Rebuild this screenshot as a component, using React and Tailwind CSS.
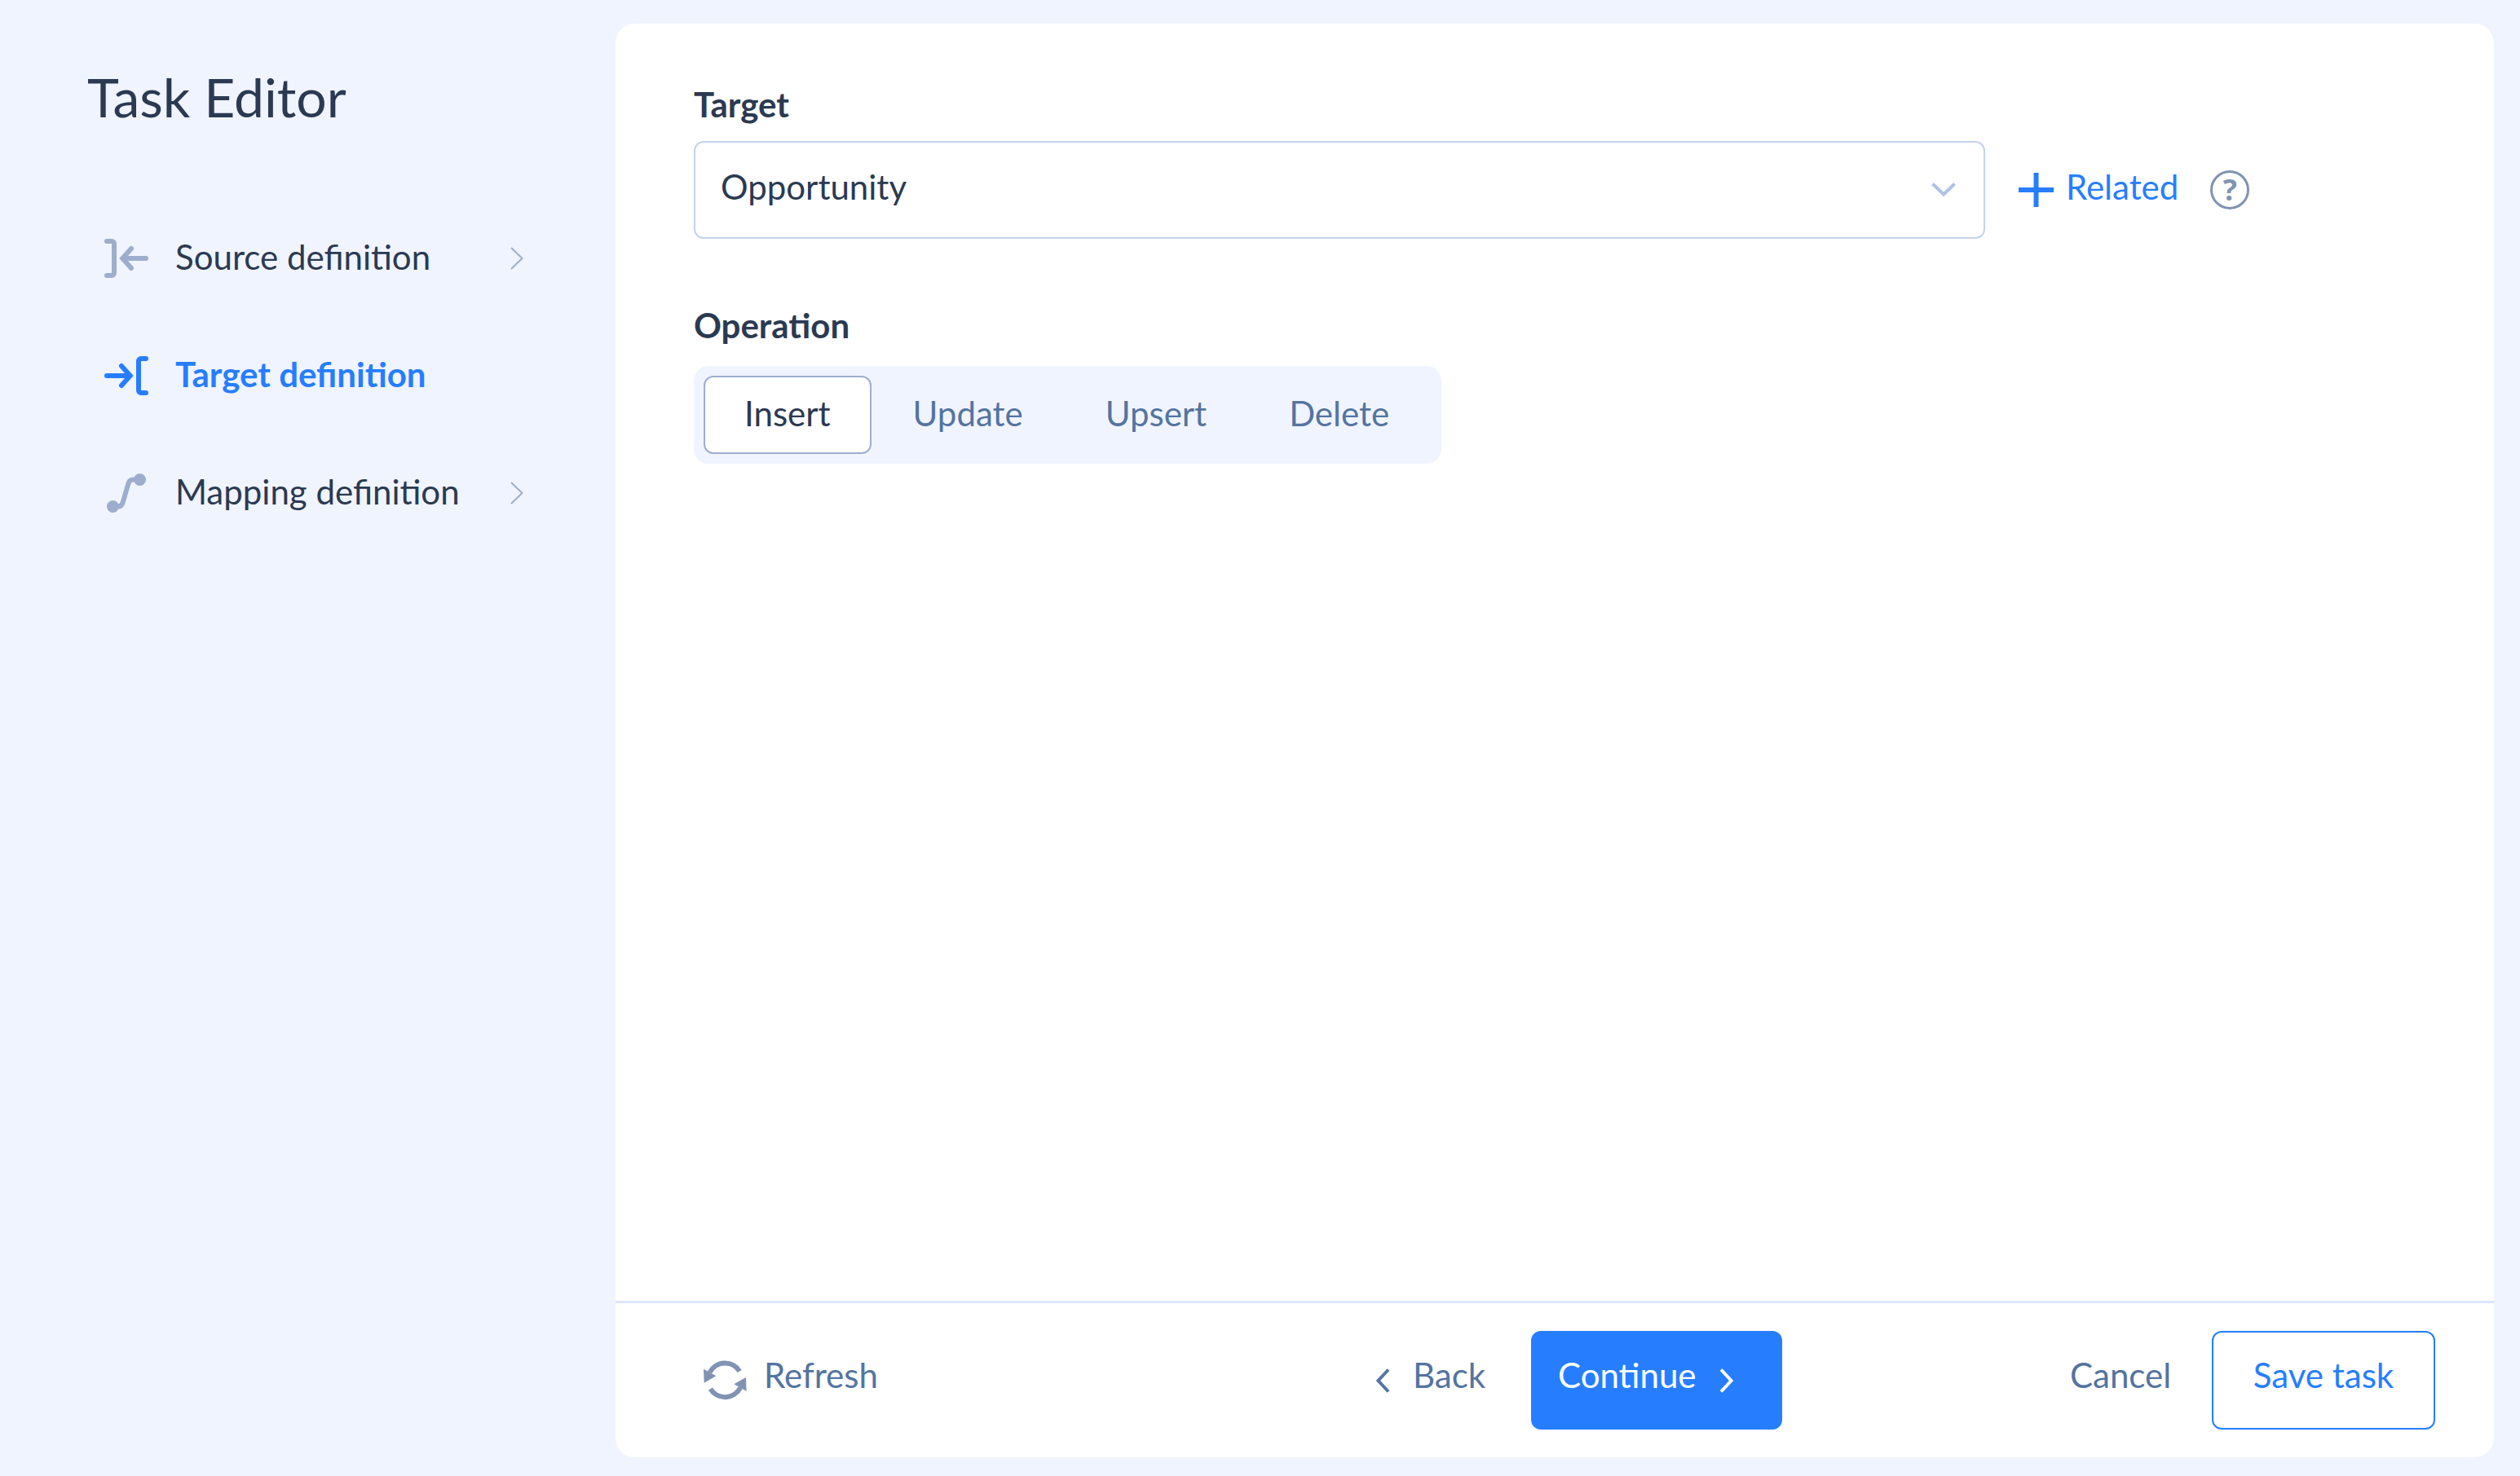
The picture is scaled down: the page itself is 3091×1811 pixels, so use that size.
import React from 'react'

function SourceIcon() {
  return (
    <svg className="w-[54px] h-12" viewBox="0 0 54 48" fill="none" stroke="currentColor" strokeWidth="6" strokeLinecap="round">
      <path d="M3 3H9a3 3 0 0 1 3 3V42a3 3 0 0 1-3 3H3" />
      <path d="M51 24H24M33 12L22.3 24L33 36" />
    </svg>
  )
}

function TargetIcon() {
  return (
    <svg className="w-[54px] h-12" viewBox="0 0 54 48" fill="none" stroke="currentColor" strokeWidth="6" strokeLinecap="round">
      <path d="M51 3H45a3 3 0 0 0-3 3V42a3 3 0 0 0 3 3H51" />
      <path d="M3 24H30M21 12L31.7 24L21 36" />
    </svg>
  )
}

function MappingIcon() {
  return (
    <svg className="w-[54px] h-12" viewBox="0 0 54 48" fill="none" stroke="currentColor" strokeWidth="6">
      <circle cx="10.5" cy="40.5" r="7.5" fill="currentColor" stroke="none" />
      <circle cx="43.5" cy="7.5" r="7.5" fill="currentColor" stroke="none" />
      <path d="M10.5 40.5H17C20 40.5 21.5 39 22.5 36L29.5 12C30.5 9 32 7.5 35 7.5H43.5" />
    </svg>
  )
}

function RefreshIcon() {
  return (
    <svg className="w-[53px] h-[49px]" viewBox="0 0 53 49" fill="none">
      <path d="M7.5 15A21 21 0 0 1 44.2 13.5" stroke="currentColor" strokeWidth="6" />
      <path d="M45.1 33.6A21 21 0 0 1 8.4 35.1" stroke="currentColor" strokeWidth="6" />
      <path d="M0 10.7L15.3 19.3L0.7 27.7Z" fill="currentColor" />
      <path d="M52.6 37.9L37.3 29.3L51.9 20.9Z" fill="currentColor" />
    </svg>
  )
}

function NavItem(props) {
  return (
    <li className="flex items-center h-36 pl-32 pr-[112px]">
      <span className={props.active ? 'text-[#267eff]' : 'text-[#9dadcd]'}>{props.icon}</span>
      <span className={props.active ? 'ml-[33px] pb-1 font-bold text-[#267eff]' : 'ml-[33px] pb-1'}>{props.name}</span>
      {!props.active && (
        <svg className="ml-auto w-[17px] h-[28px] text-[#9dadcd]" viewBox="0 0 17 28" fill="none" stroke="currentColor" strokeWidth="2">
          <path d="M1 1L14.5 14L1 27" />
        </svg>
      )}
    </li>
  )
}

function Operation(props) {
  return (
    <button
      className={
        props.selected
          ? 'h-24 px-12 pb-1 border-2 border-[#9dafd0] rounded-xl bg-white'
          : 'h-24 px-12 pb-1 border-2 border-transparent text-[#5474a1]'
      }>
      {props.name}
    </button>
  )
}

function App() {
  const operations = ['Insert', 'Update', 'Upsert', 'Delete']

  return (
    <div className="flex w-[3091px] h-[1811px] bg-[#f0f4ff] font-['Lato',sans-serif] text-[42px] leading-none text-[#2b3a52] overflow-hidden">
      <aside className="w-[755px]">
        <h1 className="pt-[86px] pl-[107px] text-[66px] leading-[66px]">Task Editor</h1>
        <ul className="mt-[93px]">
          <NavItem name="Source definition" icon={<SourceIcon />} />
          <NavItem name="Target definition" icon={<TargetIcon />} active />
          <NavItem name="Mapping definition" icon={<MappingIcon />} />
        </ul>
      </aside>
      <main className="flex flex-col mt-[29px] w-[2304px] h-[1759px] rounded-3xl bg-white">
        <section className="flex-1 px-24 pt-[78px]">
          <label className="block font-bold">Target</label>
          <div className="flex items-center mt-6 h-[120px]">
            <div className="flex items-center justify-between w-[1584px] h-[120px] pl-[31px] pr-[34px] border-2 border-[#c4d3ec] rounded-xl">
              <span className="pb-2">Opportunity</span>
              <svg className="w-[30px] h-[18px]" viewBox="0 0 30 18" fill="none" stroke="#aec3e4" strokeWidth="4">
                <path d="M1.5 1.5L15 14.5L28.5 1.5" />
              </svg>
            </div>
            <button className="flex items-center ml-[41px] text-[#267eff]">
              <svg className="w-[43px] h-[42px]" viewBox="0 0 43 42" fill="none" stroke="currentColor" strokeWidth="6">
                <path d="M0 21H43M21.5 0V42" />
              </svg>
              <span className="ml-[15px] pb-2">Related</span>
            </button>
            <span className="flex items-center justify-center ml-[39px] size-12 border-[3px] border-[#8193b3] rounded-full font-['Open_Sans',sans-serif] text-[36px] font-bold text-[#8193b3]">
              ?
            </span>
          </div>
          <label className="block mt-[85px] font-bold">Operation</label>
          <div className="flex items-center gap-px mt-[29px] w-[917px] h-[120px] pl-3 rounded-[18px] bg-[#f0f4ff]">
            {operations.map((name) => {
              return <Operation key={name} name={name} selected={name === 'Insert'} />
            })}
          </div>
        </section>
        <footer className="flex items-center h-[192px] pl-[108px] border-t-[3px] border-[#dce6fd] text-[#5474a1]">
          <button className="flex items-center w-[825px]">
            <span className="text-[#8193b3]"><RefreshIcon /></span>
            <span className="ml-[21px] pb-[14px]">Refresh</span>
          </button>
          <button className="flex items-center w-[190px]">
            <svg className="w-[17px] h-[30px]" viewBox="0 0 17 30" fill="none" stroke="currentColor" strokeWidth="4">
              <path d="M15 1.5L2.5 15L15 28.5" />
            </svg>
            <span className="ml-7 pb-[14px]">Back</span>
          </button>
          <button className="flex items-center w-[308px] h-[121px] pl-[33px] rounded-xl bg-[#267eff] text-white">
            <span className="pb-[14px]">Continue</span>
            <svg className="ml-7 w-[17px] h-[30px]" viewBox="0 0 17 30" fill="none" stroke="currentColor" strokeWidth="4">
              <path d="M2 1.5L14.5 15L2 28.5" />
            </svg>
          </button>
          <button className="ml-[353px] w-[174px] pb-[14px] text-left">Cancel</button>
          <button className="w-[274px] h-[121px] pb-[14px] border-2 border-[#267eff] rounded-xl text-[#267eff]">Save task</button>
        </footer>
      </main>
    </div>
  )
}

export default App
